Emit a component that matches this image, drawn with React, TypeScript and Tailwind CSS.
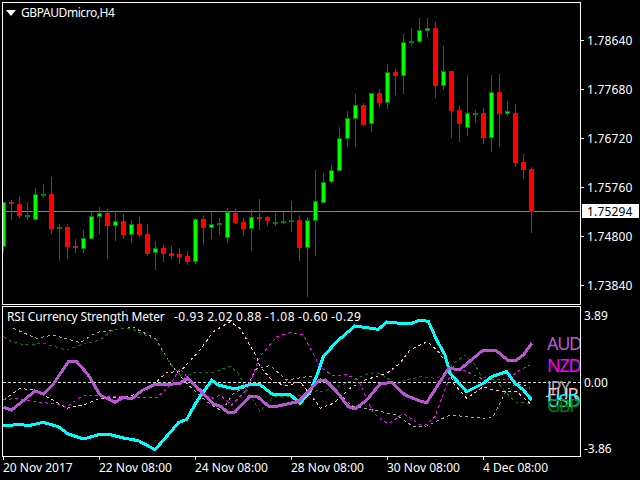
const font = "font-['Noto_Sans','Liberation_Sans',sans-serif]";

// [x, wickTop, wickBottom, bodyTop, bodyBottom] in 3x zoomed y, up = green
type Candle = [number, number, number, number, number, boolean];

const candles: Candle[] = [
  [3, 606, 760, 606, 740, true],
  [11, 600, 660, 606, 612, false],
  [19, 588, 655, 612, 647, false],
  [27, 606, 660, 644, 649, true],
  [35, 564, 660, 583, 659, true],
  [43, 552, 594, 581, 585, true],
  [51, 531, 702, 582, 687, false],
  [59, 672, 783, 681, 687, true],
  [67, 672, 777, 681, 741, false],
  [75, 717, 759, 738, 742, false],
  [83, 690, 759, 714, 747, true],
  [91, 636, 717, 648, 717, true],
  [99, 621, 702, 639, 651, true],
  [107, 627, 777, 639, 678, false],
  [115, 633, 723, 663, 678, true],
  [123, 642, 717, 663, 705, false],
  [131, 660, 729, 672, 705, true],
  [139, 651, 711, 672, 705, false],
  [147, 672, 768, 702, 762, false],
  [155, 723, 810, 744, 759, true],
  [163, 735, 786, 744, 762, false],
  [171, 738, 777, 759, 768, false],
  [179, 744, 792, 762, 771, false],
  [187, 753, 795, 768, 786, false],
  [195, 654, 792, 657, 786, true],
  [203, 645, 735, 657, 684, false],
  [211, 633, 717, 672, 684, true],
  [219, 654, 705, 669, 675, true],
  [227, 624, 729, 636, 714, true],
  [235, 627, 672, 639, 669, false],
  [243, 654, 708, 666, 687, false],
  [251, 627, 753, 651, 687, true],
  [259, 597, 690, 651, 654, false],
  [267, 648, 678, 651, 663, false],
  [275, 639, 678, 666, 672, true],
  [283, 636, 672, 663, 669, true],
  [291, 603, 696, 660, 666, true],
  [299, 645, 783, 660, 744, false],
  [307, 651, 891, 660, 744, true],
  [315, 510, 768, 603, 663, true],
  [323, 519, 608, 546, 608, true],
  [331, 495, 549, 510, 546, true],
  [339, 381, 513, 414, 513, true],
  [347, 333, 441, 354, 417, true],
  [355, 282, 441, 315, 357, true],
  [363, 309, 375, 315, 375, false],
  [371, 279, 396, 279, 372, true],
  [379, 267, 324, 279, 309, false],
  [387, 195, 327, 216, 309, true],
  [395, 207, 285, 216, 228, false],
  [403, 102, 282, 126, 228, true],
  [411, 84, 138, 123, 129, true],
  [419, 54, 129, 90, 126, true],
  [427, 54, 114, 84, 93, true],
  [435, 66, 294, 84, 258, false],
  [443, 138, 270, 213, 258, true],
  [451, 213, 414, 213, 333, false],
  [459, 318, 426, 330, 372, false],
  [467, 225, 408, 339, 384, true],
  [475, 330, 369, 339, 345, true],
  [483, 324, 432, 339, 414, false],
  [491, 225, 456, 276, 414, true],
  [499, 222, 441, 276, 342, false],
  [507, 303, 348, 333, 342, true],
  [515, 312, 501, 339, 489, false],
  [523, 462, 537, 486, 510, false],
  [531, 501, 699, 507, 636, false],
];

// traced from the two halves of the lower pane, zoomed 3x
const z = (left: number[][], right: number[][]) =>
  [
    ...left.map(([x, y]) => `${x / 3},${300 + y / 3}`),
    ...right.map(([x, y]) => `${320 + x / 3},${300 + y / 3}`),
  ].join(" ");

const cyan = z(
  [[10,378],[50,374],[90,376],[130,367],[175,380],[205,402],[250,417],[300,403],[330,404],[370,414],[415,422],[465,449],[510,398],[535,368],[560,358],[590,305],[635,241],[655,255],[705,267],[745,255],[780,254],[820,285],[870,283],[900,310],[930,275],[955,215]],
  [[10,170],[50,125],[105,78],[175,88],[200,66],[240,70],[270,72],[300,60],[325,64],[350,120],[375,165],[390,220],[440,275],[490,250],[515,230],[560,215],[585,250],[610,270],[635,300]]
);
const purple = z(
  [[10,322],[35,330],[60,310],[105,273],[130,282],[160,252],[205,185],[230,185],[265,225],[300,285],[345,307],[370,292],[395,297],[425,272],[465,253],[510,253],[540,250],[562,235],[600,270],[640,312],[660,318],[685,338],[705,336],[750,288],[770,288],[805,318],[825,320],[870,310],[895,305],[955,243]],
  [[15,240],[50,275],[85,320],[105,327],[140,300],[180,252],[215,247],[255,285],[300,303],[320,308],[385,206],[420,208],[490,150],[530,153],[565,182],[590,180],[610,165],[635,130]]
);
const pink = z(
  [[10,300],[60,265],[100,270],[150,295],[200,325],[250,315],[300,295],[390,290],[465,250],[500,217],[540,215],[600,150],[640,95],[690,65],[720,85],[770,170],[780,200],[820,245],[860,258],[900,245],[955,315]],
  [[0,325],[40,310],[90,265],[135,240],[200,220],[240,190],[270,150],[322,125],[355,155],[380,190],[400,250],[440,295],[490,260],[510,268],[560,275],[590,275],[630,310]]
);
const magenta = z(
  [[10,300],[50,295],[100,305],[170,312],[200,320],[250,285],[330,290],[470,293],[510,255],[540,205],[560,230],[600,280],[640,295],[660,285],[695,315],[740,270],[780,170],[830,110],[870,98],[910,105],[955,190]],
  [[0,200],[40,228],[80,224],[115,240],[160,340],[205,372],[250,340],[310,380],[345,350],[385,240],[400,200],[440,215],[490,238],[560,240],[600,210],[630,195]]
);
const green = z(
  [[10,110],[35,125],[75,135],[130,130],[200,150],[240,135],[300,120],[340,88],[390,85],[470,120],[510,190],[550,235],[580,218],[640,217],[690,198],[715,220],[740,270],[780,335],[820,290],[880,290],[930,280],[955,270]],
  [[0,275],[40,265],[100,240],[140,222],[170,217],[200,232],[225,255],[260,240],[300,230],[350,235],[380,220],[400,190],[435,165],[465,195],[485,230],[530,245],[570,290],[590,308],[635,310]]
);
const gray = z(
  [[40,85],[110,115],[160,105],[240,128],[290,97],[400,82],[465,115],[510,190],[560,250],[620,305],[665,333],[700,280],[740,260],[770,205],[810,197],[860,240],[920,230],[955,230]],
  [[50,275],[100,320],[150,328],[230,345],[280,380],[320,378],[390,345],[490,355],[520,350],[560,270],[590,250],[630,262]]
);

const prices = ["1.78640", "1.77680", "1.76720", "1.75760", "1.74800", "1.73840"];
const dates = ["20 Nov 2017", "22 Nov 08:00", "24 Nov 08:00", "28 Nov 08:00", "30 Nov 08:00", "4 Dec 08:00"];

function CandleMark({ c }: { c: Candle }) {
  const [x, wt, wb, bt, bb, up] = c;
  const top = Math.round(wt / 3);
  const bottom = Math.round(wb / 3);
  const bodyTop = Math.round(bt / 3);
  const bodyBottom = Math.round(bb / 3);
  const h = bodyBottom - bodyTop;
  const wick = up ? "#008000" : "#b22222";
  return (
    <g>
      <rect x={x} y={top} width={1} height={bottom - top} fill={wick} />
      {h <= 2 ? (
        <rect x={x - 2} y={bodyTop} width={5} height={2} fill={up ? "#008000" : "#b22222"} />
      ) : up ? (
        <rect x={x - 1.5} y={bodyTop + 0.5} width={4} height={h - 1} fill="#00ff00" stroke="#008000" strokeWidth={1} />
      ) : (
        <rect x={x - 2} y={bodyTop} width={5} height={h} fill="#ff0000" />
      )}
    </g>
  );
}

export default function App() {
  return (
    <div className={`w-[640px] h-[480px] bg-black text-white overflow-hidden pt-[2px] pl-[2px] text-[12px] leading-none ${font}`}>
      {/* main pane + price axis */}
      <div className="flex h-[303px]">
        <div className="relative w-[579px] border border-white">
          <svg width={577} height={301} viewBox="3 3 577 301" shapeRendering="crispEdges" className="block">
            <rect x={3} y={211} width={577} height={1} fill="#778899" />
            {candles.map((c) => (
              <CandleMark key={c[0]} c={c} />
            ))}
          </svg>
          <div className="absolute left-[3px] top-[3px] flex items-center gap-[5px]">
            <svg width={10} height={6} viewBox="0 0 10 6" className="block">
              <path d="M0 0H10L5 6Z" fill="#fff" />
            </svg>
            <span className="leading-[14px] tracking-[-0.42px]">GBPAUDmicro,H4</span>
          </div>
        </div>
        <div className="relative flex-1 flex flex-col pt-[14px]">
          {prices.map((p) => (
            <div key={p} className="h-[49px] shrink-0 flex items-center gap-[3px]">
              <div className="w-[3px] h-px bg-white" />
              <span className="tracking-[0.15px]">{p}</span>
            </div>
          ))}
          <div className="absolute left-px top-[202px] w-[57px] h-[14px] bg-white text-black flex items-center pl-[5px]">
            <span className="mt-[2px] tracking-[0.15px]">1.75294</span>
          </div>
        </div>
      </div>

      {/* indicator pane + value axis */}
      <div className="flex h-[151px] mt-px">
        <div className="relative w-[579px] border border-white overflow-hidden">
          <svg width={577} height={149} viewBox="3 307 577 149" className="block" fill="none" shapeRendering="crispEdges">
            <line x1={3} y1={382.5} x2={580} y2={382.5} stroke="#d8d8d8" strokeDasharray="3 2" />
            <polyline points={gray} stroke="#a9a9a9" strokeDasharray="3 3" />
            <polyline points={green} stroke="#008000" strokeDasharray="3 3" />
            <polyline points={pink} stroke="#ffc0cb" strokeDasharray="3 3" />
            <polyline points={magenta} stroke="#ff00ff" strokeDasharray="3 3" />
            <polyline points={cyan} stroke="#00ffff" strokeWidth={3} />
            <polyline points={purple} stroke="#ba55d3" strokeWidth={3} />
          </svg>
          <div className="absolute left-[4px] top-[3px] flex leading-[14px] whitespace-nowrap">
            <span className="w-[167px] tracking-[-0.12px]">RSI Currency Strength Meter</span>
            <span className="tracking-[0.5px] [word-spacing:-0.6px]">-0.93 2.02 0.88 -1.08 -0.60 -0.29</span>
          </div>
          <span className="absolute left-[544px] top-[26px] text-[18px] leading-[20px] tracking-[-1.3px] text-[#ba55d3]">AUD</span>
          <span className="absolute left-[544px] top-[48px] text-[18px] leading-[20px] tracking-[-1.3px] text-[#ff00ff]">NZD</span>
          <span className="absolute left-[544px] top-[70px] text-[18px] leading-[20px] tracking-[-1.3px] text-[#a9a9a9]">JPY</span>
          <span className="absolute left-[544px] top-[77px] text-[18px] leading-[20px] tracking-[-1.3px] text-[#ffc0cb]">EUR</span>
          <span className="absolute left-[544px] top-[83px] text-[18px] leading-[20px] tracking-[-1.3px] text-[#00ffff]">USD</span>
          <span className="absolute left-[544px] top-[88px] text-[18px] leading-[20px] tracking-[-1.3px] text-[#008000]">GBP</span>
        </div>
        <div className="flex-1 flex flex-col justify-between pl-[3px] pt-[3px] pb-[1px]">
          <span className="leading-[14px]">3.89</span>
          <span className="leading-[14px]">0.00</span>
          <span className="leading-[14px]">-3.86</span>
        </div>
      </div>

      {/* time axis */}
      <div className="flex pl-px">
        {dates.map((d) => (
          <div key={d} className="w-[96px] flex flex-col">
            <div className="w-px h-[3px] bg-white" />
            <span className="leading-[14px] mt-[1px] whitespace-nowrap">{d}</span>
          </div>
        ))}
      </div>
    </div>
  );
}
